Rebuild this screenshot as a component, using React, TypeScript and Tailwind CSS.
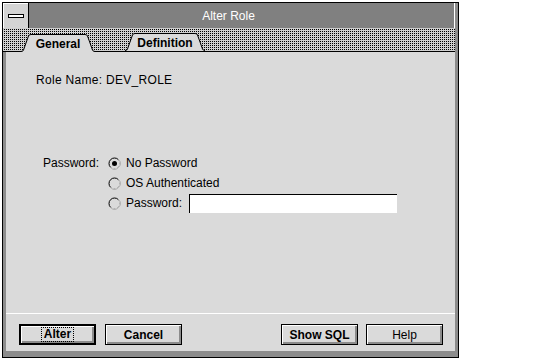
const FACE = '#dadada';

function SystemBox() {
    return (
        <div className="flex h-full w-[26px] items-center justify-center border-r border-black bg-[#d4d4d4] shadow-[inset_1px_1px_0_#fff]">
            <div className="h-[4px] w-[16px] border border-black bg-white" />
        </div>
    );
}

function Tab({ label, width, active }: { label: string; width: number; active?: boolean }) {
    const w = width;
    const outline = `M0 17.5 Q2 17.5 2.5 16 L7.5 2 Q8 0.5 10 0.5 L${w - 10} 0.5 Q${w - 8} 0.5 ${w - 7.5} 2 L${w - 2.5} 16 Q${w - 2} 17.5 ${w} 17.5`;

    return (
        <div
            className={`relative flex h-[18px] items-center justify-center pt-[1px] font-bold ${active ? 'z-10 -mb-px' : ''}`}
            style={{ width }}
        >
            <svg className="absolute inset-0" width={w} height={18} viewBox={`0 0 ${w} 18`}>
                <path d={`${outline} L${w} 18 L0 18 Z`} fill={FACE} />
                <path d={outline} fill="none" stroke="#000" strokeWidth={1} />
            </svg>
            <span className="relative">{label}</span>
        </div>
    );
}

function Radio({ checked, children }: { checked?: boolean; children: React.ReactNode }) {
    return (
        <div className="flex items-center gap-[5px]">
            <svg width={13} height={13} viewBox="0 0 13 13">
                <circle cx={6.5} cy={6.5} r={5.5} fill={FACE} stroke="#000" strokeWidth={1} />
                <path d="M10.4 2.6 A5.5 5.5 0 0 1 2.6 10.4" fill="none" stroke="#fff" strokeWidth={1} />
                {checked && <circle cx={6.5} cy={6.5} r={2.5} fill="#000" />}
            </svg>
            {children}
        </div>
    );
}

function Button({ label, bold = true, isDefault }: { label: string; bold?: boolean; isDefault?: boolean }) {
    return (
        <button
            className={`flex h-[21px] w-[77px] items-center justify-center bg-[#dadada] shadow-[inset_1px_1px_0_#fff,inset_-2px_-2px_0_#8c8c8c] ${isDefault ? 'border-2' : 'border'} border-black ${bold ? 'font-bold' : ''}`}
        >
            {isDefault ? (
                <span className="border border-dotted border-black px-[2px] leading-[13px]">{label}</span>
            ) : (
                label
            )}
        </button>
    );
}

export default function App() {
    return (
        <div className="h-[361px] w-[536px] bg-white pl-[2px] pt-[2px] font-['Liberation_Sans',Arial,sans-serif] text-[12px] text-black">
            <div className="flex h-[356px] w-[457px] flex-col border border-black bg-[#8c8c8c]">
                {/* Title bar */}
                <div className="mr-[3px] flex h-[25px] border-r border-white bg-[#808080]">
                    <SystemBox />
                    <div className="flex flex-1 items-center justify-center pr-[26px] text-white">Alter Role</div>
                </div>

                {/* Tabs */}
                <div className="mr-[3px] flex h-[24px] items-end gap-[30px] border-b border-black bg-[conic-gradient(from_90deg_at_1px_1px,#000_90deg,#d0d0d0_0)] bg-[length:2px_2px] pl-[18px]">
                    <Tab label="General" width={74} active />
                    <Tab label="Definition" width={80} />
                </div>

                {/* Page */}
                <div className="mx-[3px] mb-[6px] flex flex-1 flex-col bg-[#dadada]">
                    <div className="pl-[30px] pt-[21px] leading-[14px] tracking-[0.3px]">Role Name: DEV_ROLE</div>

                    <div className="mt-[66px] grid grid-cols-[65px_1fr] pl-[37px]">
                        <div className="flex h-[20px] items-center">Password:</div>
                        <div className="flex h-[20px] items-center">
                            <Radio checked>No Password</Radio>
                        </div>
                        <div />
                        <div className="flex h-[20px] items-center">
                            <Radio>OS Authenticated</Radio>
                        </div>
                        <div />
                        <div className="flex h-[20px] items-center">
                            <Radio>Password:</Radio>
                            <input className="ml-[7px] h-[19px] w-[208px] border-l border-t border-black bg-white outline-none" />
                        </div>
                    </div>

                    <div className="flex-1" />

                    <div className="border-t border-white pb-[6px] pl-[13px] pr-[12px] pt-[10px]">
                        <div className="flex justify-between">
                            <div className="flex gap-[9px]">
                                <Button label="Alter" isDefault />
                                <Button label="Cancel" />
                            </div>
                            <div className="flex gap-[8px]">
                                <Button label="Show SQL" />
                                <Button label="Help" bold={false} />
                            </div>
                        </div>
                    </div>
                </div>
            </div>
        </div>
    );
}
